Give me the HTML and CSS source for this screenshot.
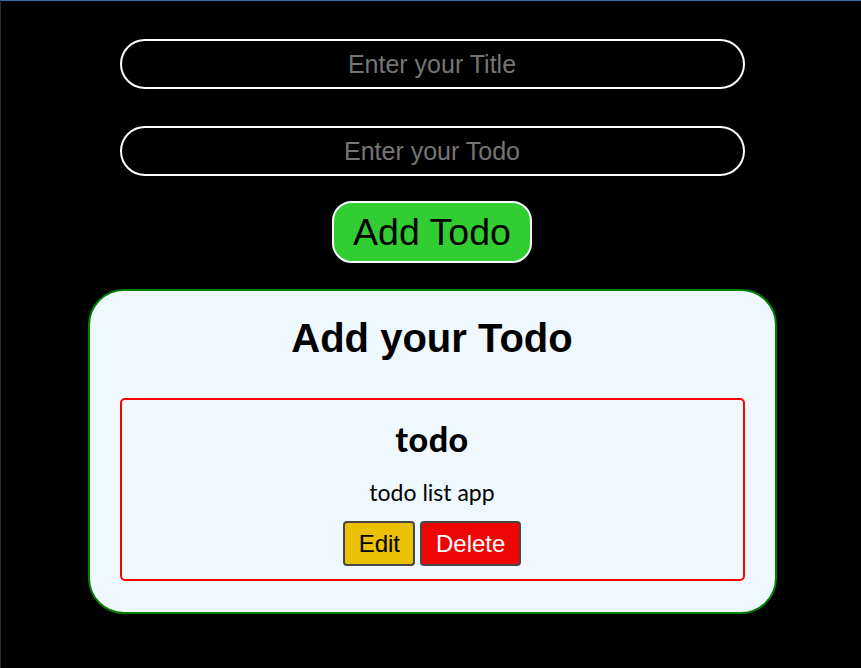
FILE: index.html
```html
<!DOCTYPE html>
<html lang="en">
<head>
<meta charset="utf-8">
<title>Todo</title>
<link rel="stylesheet" href="styles.css">
</head>
<body>
<div class="app">
  <form class="todo-form">
    <input class="field" type="text" placeholder="Enter your Title">
    <input class="field field-second" type="text" placeholder="Enter your Todo">
    <button class="add-btn" type="button">Add Todo</button>
  </form>
  <section class="card">
    <h2 class="card-title">Add your Todo</h2>
    <div class="todo-item">
      <h3 class="todo-title">todo</h3>
      <p class="todo-desc">todo list app</p>
      <div class="actions">
        <button class="btn btn-edit" type="button">Edit</button>
        <button class="btn btn-delete" type="button">Delete</button>
      </div>
    </div>
  </section>
</div>
</body>
</html>
```

FILE: styles.css
```css
html, body {
  margin: 0;
  padding: 0;
  background: #000;
  height: 100%;
}
body {
  border-top: 1px solid #3d66ad;
  border-left: 1px solid #2a2a2a;
  box-sizing: border-box;
  font-family: "Liberation Sans", Arial, sans-serif;
}
.app {
  display: flex;
  flex-direction: column;
  align-items: center;
  padding: 38px 0 0 2px;
}
.todo-form {
  display: flex;
  flex-direction: column;
  align-items: center;
  margin: 0;
}
.field {
  box-sizing: border-box;
  width: 625px;
  height: 50px;
  background: #000;
  border: 2px solid #fff;
  border-radius: 25px;
  color: #fff;
  font-family: "Liberation Sans", Arial, sans-serif;
  font-size: 25px;
  text-align: center;
  outline: none;
  padding: 0 20px;
}
.field::placeholder {
  color: #757575;
}
.field-second {
  margin-top: 37px;
}
.add-btn {
  box-sizing: border-box;
  margin-top: 25px;
  width: 200px;
  height: 62px;
  background: #32cd32;
  border: 2px solid #fff;
  border-radius: 20px;
  color: #000;
  font-family: "Liberation Sans", Arial, sans-serif;
  font-size: 37.5px;
  padding: 0;
}
.card {
  box-sizing: border-box;
  margin-top: 26px;
  width: 689px;
  background: #f0f8ff;
  border: 2px solid #008000;
  border-radius: 36px;
  padding: 0 30px 31px;
}
.card-title {
  margin: 24px 0 37px;
  text-align: center;
  font-size: 40px;
  font-weight: bold;
  line-height: 46px;
  color: #000;
}
.todo-item {
  border: 2px solid #f00;
  border-radius: 5px;
  display: flex;
  flex-direction: column;
  align-items: center;
  padding: 19px 0 13px;
  font-family: Lato, "Open Sans", sans-serif;
}
.todo-title {
  margin: 0;
  font-size: 34px;
  font-weight: 900;
  line-height: 40px;
  letter-spacing: 0.5px;
  color: #000;
}
.todo-desc {
  margin: 20px 0 0;
  font-size: 23px;
  line-height: 27px;
  color: #000;
}
.actions {
  display: flex;
  gap: 5px;
  margin-top: 15px;
}
.btn {
  box-sizing: border-box;
  height: 45px;
  padding: 0 13.5px;
  border: 2px solid #474747;
  border-radius: 4px;
  font-family: "Liberation Sans", Arial, sans-serif;
  font-size: 24px;
}
.btn-edit {
  background: #ebc105;
  color: #000;
}
.btn-delete {
  background: #f00505;
  color: #fff;
}
```
